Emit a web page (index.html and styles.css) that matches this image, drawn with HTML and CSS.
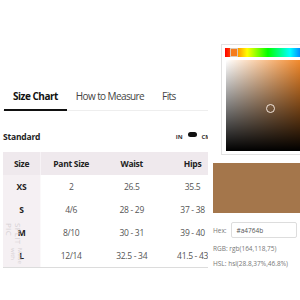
FILE: index.html
```html
<!DOCTYPE html>
<html lang="en">
<head>
<meta charset="UTF-8">
<title>Size Chart</title>
<link rel="stylesheet" href="styles.css">
</head>
<body>
  <div class="sheet">
    <nav class="tabs">
      <span class="tab active">Size Chart</span>
      <span class="tab">How to Measure</span>
      <span class="tab">Fits</span>
    </nav>

    <div class="chart-head">
      <span class="chart-title">Standard</span>
      <span class="units">IN <span class="switch"></span> CM</span>
    </div>

    <table class="chart">
      <thead>
        <tr><th>Size</th><th>Pant Size</th><th>Waist</th><th>Hips</th></tr>
      </thead>
      <tbody>
        <tr><th>XS</th><td>2</td><td>26.5</td><td>35.5</td></tr>
        <tr><th>S</th><td>4/6</td><td>28 - 29</td><td>37 - 38</td></tr>
        <tr><th>M</th><td>8/10</td><td>30 - 31</td><td>39 - 40</td></tr>
        <tr><th>L</th><td>12/14</td><td>32.5 - 34</td><td>41.5 - 43</td></tr>
      </tbody>
    </table>

    <div class="watermark"><span class="wm-big">SPLIT PIC</span><span>Made with</span></div>
  </div>

  <!-- colour picker tool lying over the page -->
  <aside class="picker">
    <div class="picker-box">
      <div class="hue-bar"><span class="hue-handle"></span></div>
      <div class="sv-area"><span class="sv-marker"></span></div>
    </div>
    <div class="swatch"></div>
    <div class="hex-row">
      <label>Hex:</label>
      <span class="hex-input">#a4764b</span>
    </div>
    <p class="readout">RGB: rgb(164,118,75)</p>
    <p class="readout">HSL: hsl(28.8,37%,46.8%)</p>
  </aside>
</body>
</html>
```

FILE: styles.css
```css
html {
  font-family: "Open Sans", "Liberation Sans", sans-serif;
  color: #333;
}

body {
  margin: 0;
  width: 300px;
  height: 300px;
  overflow: hidden;
  background: #fff;
  position: relative;
}

.sheet {
  position: relative;
  padding: 85px 0 0 3px;
  width: 240px;
}

.tabs {
  display: flex;
  padding-left: 1px;
  width: 204px;
  border-bottom: 1px solid #eee;
}

.tab {
  padding: 4px 9px 6px;
  font-size: 10px;
  color: #444;
  letter-spacing: -0.6px;
}

.tab.active {
  font-weight: 700;
  color: #111;
  border-bottom: 2px solid #111;
  margin-bottom: -1px;
  letter-spacing: -0.5px;
}

.chart-head {
  display: flex;
  justify-content: space-between;
  align-items: center;
  margin-top: 20px;
  width: 220px;
}

.chart-title {
  font-size: 8.5px;
  font-weight: 700;
  color: #222;
  letter-spacing: -0.2px;
}

.units {
  display: flex;
  align-items: center;
  font-size: 6px;
  font-weight: 700;
  margin-right: 12px;
  gap: 5px;
}

.switch {
  width: 9px;
  height: 5px;
  border-radius: 3px;
  background: #111;
  margin-top: -4px;
}

.chart {
  border-collapse: collapse;
  margin-top: 10px;
  font-size: 8.5px;
  letter-spacing: -0.3px;
  table-layout: fixed;
  width: 220px;
}

.chart th,
.chart td {
  height: 23px;
  padding: 0;
  text-align: center;
}

.chart thead th {
  background: #efe9ed;
  font-weight: 700;
  color: #222;
}

.chart thead th:first-child {
  width: 37px;
  border-right: 1px solid #f7f3f6;
}

.chart tbody th {
  background: #f5f0f3;
  font-weight: 700;
  color: #222;
  border-right: 1px solid #fbf9fa;
}

.chart td {
  color: #555;
}

.chart tbody tr:last-child th,
.chart tbody tr:last-child td {
  border-bottom: 1px solid #dcdcdc;
}

.watermark {
  position: absolute;
  left: 5px;
  top: 223px;
  display: flex;
  writing-mode: vertical-rl;
  font-size: 6px;
  color: #d6d0d4;
  line-height: 7px;
}

.wm-big {
  font-size: 8px;
  line-height: 9px;
  letter-spacing: 0.3px;
}

.picker {
  position: absolute;
  left: 208px;
  top: 0;
  width: 92px;
  height: 300px;
  background: #fff;
  overflow: hidden;
}

.picker-box {
  margin: 44px 0 0 13px;
  width: 100px;
  height: 111px;
  border: 1px solid #e2e2e2;
  padding: 3px 0 0 3px;
  box-sizing: border-box;
}

.hue-bar {
  position: relative;
  width: 130px;
  height: 9px;
  background: linear-gradient(to right, #f00, #ff0 17%, #0f0 33%, #0ff 50%, #00f 67%, #f0f 83%, #f00);
}

.hue-handle {
  position: absolute;
  left: 5px;
  top: 0;
  width: 8px;
  height: 9px;
  box-sizing: border-box;
  background: #f57c1c;
  border: 1px solid #d9c9b8;
}

.sv-area {
  position: relative;
  margin: 3px 0 0 1px;
  width: 84px;
  height: 91px;
  background:
    linear-gradient(to bottom, transparent, #000),
    linear-gradient(to right, #fff, rgba(255, 255, 255, 0)),
    #f07a10;
}

.sv-marker {
  position: absolute;
  left: 40px;
  top: 44px;
  width: 9px;
  height: 9px;
  box-sizing: border-box;
  border: 1.5px solid #f3e6dc;
  border-radius: 50%;
}

.swatch {
  margin: 8px 0 0 5px;
  height: 50px;
  background: #a4764b;
}

.hex-row {
  display: flex;
  align-items: center;
  margin: 9px 0 0 5px;
  gap: 4px;
  font-size: 6.5px;
  color: #777;
}

.hex-input {
  width: 66px;
  height: 16px;
  line-height: 16px;
  box-sizing: border-box;
  border: 1px solid #ddd;
  border-radius: 2px;
  padding-left: 5px;
  color: #555;
}

.readout {
  margin: 0 0 0 5px;
  font-size: 6.5px;
  color: #777;
  line-height: 8px;
  padding-top: 7px;
}
```
